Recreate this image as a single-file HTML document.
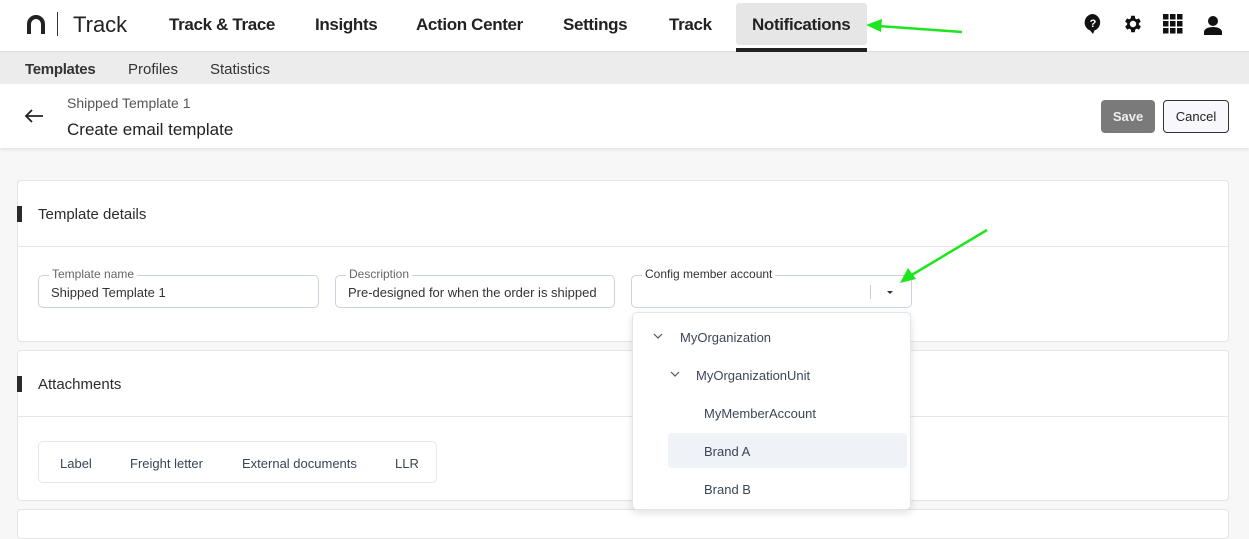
<!DOCTYPE html>
<html><head><meta charset="utf-8"><style>
*{box-sizing:border-box;margin:0;padding:0}
body{width:1249px;height:519px;overflow:hidden;background:#f7f7f7;font-family:"Liberation Sans",Arial,sans-serif;color:#1f1f1f;position:relative}
.a{position:absolute}
.top{left:0;top:0;width:1249px;height:52px;background:#fff;border-bottom:1px solid #dcdcdc}
.nav{font-size:17px;font-weight:bold;color:#222;top:15px;letter-spacing:-0.35px}
.sub{left:0;top:52px;width:1249px;height:32px;background:#ececec}
.sub span{position:absolute;top:9px;font-size:15px;color:#333}
.hdr{left:0;top:84px;width:1249px;height:64px;background:#fff;box-shadow:0 2px 3px rgba(0,0,0,.08)}
.card{left:17px;width:1212px;background:#fff;border:1px solid #e4e4e4;border-radius:4px}
.bar{left:-1px;width:5px;height:16px;background:#2a2a2a}
.ctitle{left:20px;font-size:15px;color:#2b2b2b}
.inp{height:33px;border:1px solid #c9d2de;border-radius:5px;background:#fff}
.lbl{top:-9px;left:10px;font-size:12px;color:#666;background:#fff;padding:0 3px}
.val{top:9px;left:12px;font-size:13px;color:#333}
.dd{left:632px;top:312px;width:279px;height:198px;background:#fff;border:1px solid #e2e6ec;border-radius:5px;box-shadow:0 3px 8px rgba(0,0,0,.12)}
.it{font-size:13px;color:#3c4657}
</style></head><body>
<div class="a top"></div>
<svg class="a" style="left:27px;top:15px" width="18" height="19" viewBox="0 0 18 19"><path d="M2 19V9a7 7 0 0 1 14 0v10" fill="none" stroke="#222" stroke-width="4"/></svg>
<div class="a" style="left:57px;top:12px;width:1px;height:24px;background:#333"></div>
<div class="a" style="left:73px;top:12px;font-size:22px;color:#222">Track</div>
<div class="a nav" style="left:169px">Track &amp; Trace</div>
<div class="a nav" style="left:315px">Insights</div>
<div class="a nav" style="left:416px">Action Center</div>
<div class="a nav" style="left:563px">Settings</div>
<div class="a nav" style="left:669px">Track</div>
<div class="a" style="left:736px;top:3px;width:131px;height:42px;background:#e6e6e6;border-radius:3px"></div>
<div class="a nav" style="left:752px">Notifications</div>
<div class="a" style="left:736px;top:48px;width:131px;height:4px;background:#222"></div>
<svg class="a" style="left:1083px;top:13px" width="20" height="22" viewBox="0 0 20 22"><path d="M10 1a8.5 8.5 0 0 0-3 16.4L10 21l1.5-3.6A8.5 8.5 0 0 0 10 1z" fill="#111"/><text x="10" y="14" font-size="11" font-weight="bold" fill="#fff" text-anchor="middle" font-family="Liberation Sans">?</text></svg>
<svg class="a" style="left:1122px;top:13px" width="22" height="22" viewBox="0 0 24 24"><path d="M19.4 13a7.5 7.5 0 0 0 0-2l2.1-1.6-2-3.5-2.5 1a7 7 0 0 0-1.7-1L15 3h-4l-.4 2.9a7 7 0 0 0-1.7 1l-2.5-1-2 3.5L6.6 11a7.5 7.5 0 0 0 0 2l-2.1 1.6 2 3.5 2.5-1a7 7 0 0 0 1.7 1L11 21h4l.4-2.9a7 7 0 0 0 1.7-1l2.5 1 2-3.5zM13 15.5a3.5 3.5 0 1 1 0-7 3.5 3.5 0 0 1 0 7z" fill="#111" transform="translate(-1 0)"/></svg>
<svg class="a" style="left:1163px;top:14px" width="20" height="20" viewBox="0 0 20 20" fill="#111"><rect x="0" y="0" width="5.5" height="5.5"/><rect x="7" y="0" width="5.5" height="5.5"/><rect x="14" y="0" width="5.5" height="5.5"/><rect x="0" y="7" width="5.5" height="5.5"/><rect x="7" y="7" width="5.5" height="5.5"/><rect x="14" y="7" width="5.5" height="5.5"/><rect x="0" y="14" width="5.5" height="5.5"/><rect x="7" y="14" width="5.5" height="5.5"/><rect x="14" y="14" width="5.5" height="5.5"/></svg>
<svg class="a" style="left:1204px;top:15px" width="18" height="20" viewBox="0 0 18 20" fill="#111"><circle cx="9" cy="6" r="5"/><path d="M0 20v-3c0-3 4-5 9-5s9 2 9 5v3z"/></svg>
<div class="a sub"><span style="left:25px;font-weight:bold;letter-spacing:-0.3px">Templates</span><span style="left:128px">Profiles</span><span style="left:210px">Statistics</span></div>
<div class="a hdr"></div>
<svg class="a" style="left:24px;top:108px" width="20" height="16" viewBox="0 0 20 16"><path d="M19 8H2M8 2L2 8l6 6" fill="none" stroke="#222" stroke-width="1.8"/></svg>
<div class="a" style="left:67px;top:95px;font-size:14px;color:#555">Shipped Template 1</div>
<div class="a" style="left:67px;top:120px;font-size:17px;color:#222">Create email template</div>
<div class="a" style="left:1101px;top:100px;width:54px;height:33px;background:#7a7a7a;border-radius:4px;color:#eee;font-size:13px;font-weight:bold;text-align:center;line-height:33px">Save</div>
<div class="a" style="left:1163px;top:100px;width:66px;height:33px;background:#f7f7fc;border:1px solid #333;border-radius:4px;color:#222;font-size:13px;text-align:center;line-height:31px">Cancel</div>

<div class="a card" style="top:180px;height:162px">
 <div class="a bar" style="top:25px"></div>
 <div class="a ctitle" style="top:25px">Template details</div>
 <div class="a" style="left:0;top:65px;width:1210px;height:1px;background:#e6e6e6"></div>
</div>
<div class="a inp" style="left:38px;top:275px;width:281px"><div class="a lbl">Template name</div><div class="a val">Shipped Template 1</div></div>
<div class="a inp" style="left:335px;top:275px;width:280px"><div class="a lbl">Description</div><div class="a val">Pre-designed for when the order is shipped</div></div>
<div class="a inp" style="left:631px;top:275px;width:281px"><div class="a lbl" style="color:#333">Config member account</div>
 <div class="a" style="left:238px;top:9px;width:1px;height:14px;background:#ccc"></div>
 <div class="a" style="left:255px;top:15px;border-left:3px solid transparent;border-right:3px solid transparent;border-top:3px solid #333"></div></div>

<div class="a card" style="top:350px;height:151px">
 <div class="a bar" style="top:25px"></div>
 <div class="a ctitle" style="top:25px">Attachments</div>
 <div class="a" style="left:0;top:65px;width:1210px;height:1px;background:#e6e6e6"></div>
</div>
<div class="a" style="left:38px;top:441px;width:399px;height:42px;background:#fff;border:1px solid #e6e8ec;border-radius:5px;font-size:13px;color:#3a4556">
 <span class="a" style="left:21px;top:14px">Label</span><span class="a" style="left:91px;top:14px">Freight letter</span><span class="a" style="left:203px;top:14px">External documents</span><span class="a" style="left:356px;top:14px">LLR</span></div>
<div class="a card" style="top:509px;height:30px"></div>

<div class="a dd">
 <svg class="a" style="left:20px;top:20px" width="10" height="6" viewBox="0 0 10 6"><path d="M1 1l4 4 4-4" fill="none" stroke="#555" stroke-width="1.2"/></svg>
 <div class="a it" style="left:47px;top:17px">MyOrganization</div>
 <svg class="a" style="left:37px;top:58px" width="10" height="6" viewBox="0 0 10 6"><path d="M1 1l4 4 4-4" fill="none" stroke="#555" stroke-width="1.2"/></svg>
 <div class="a it" style="left:63px;top:55px">MyOrganizationUnit</div>
 <div class="a it" style="left:71px;top:93px">MyMemberAccount</div>
 <div class="a" style="left:35px;top:120px;width:239px;height:35px;background:#eff2f7;border-radius:4px"></div>
 <div class="a it" style="left:71px;top:131px">Brand A</div>
 <div class="a it" style="left:71px;top:169px">Brand B</div>
</div>

<svg class="a" style="left:0;top:0" width="1249" height="519"><g stroke="#1ee61e" fill="#1ee61e" stroke-width="2.5">
<line x1="962" y1="32" x2="878" y2="26"/><polygon points="866,25 882,19 881,32" stroke="none"/>
<line x1="987" y1="230" x2="910" y2="276"/><polygon points="900,283 908,268 916,279" stroke="none"/></g></svg>
</body></html>
